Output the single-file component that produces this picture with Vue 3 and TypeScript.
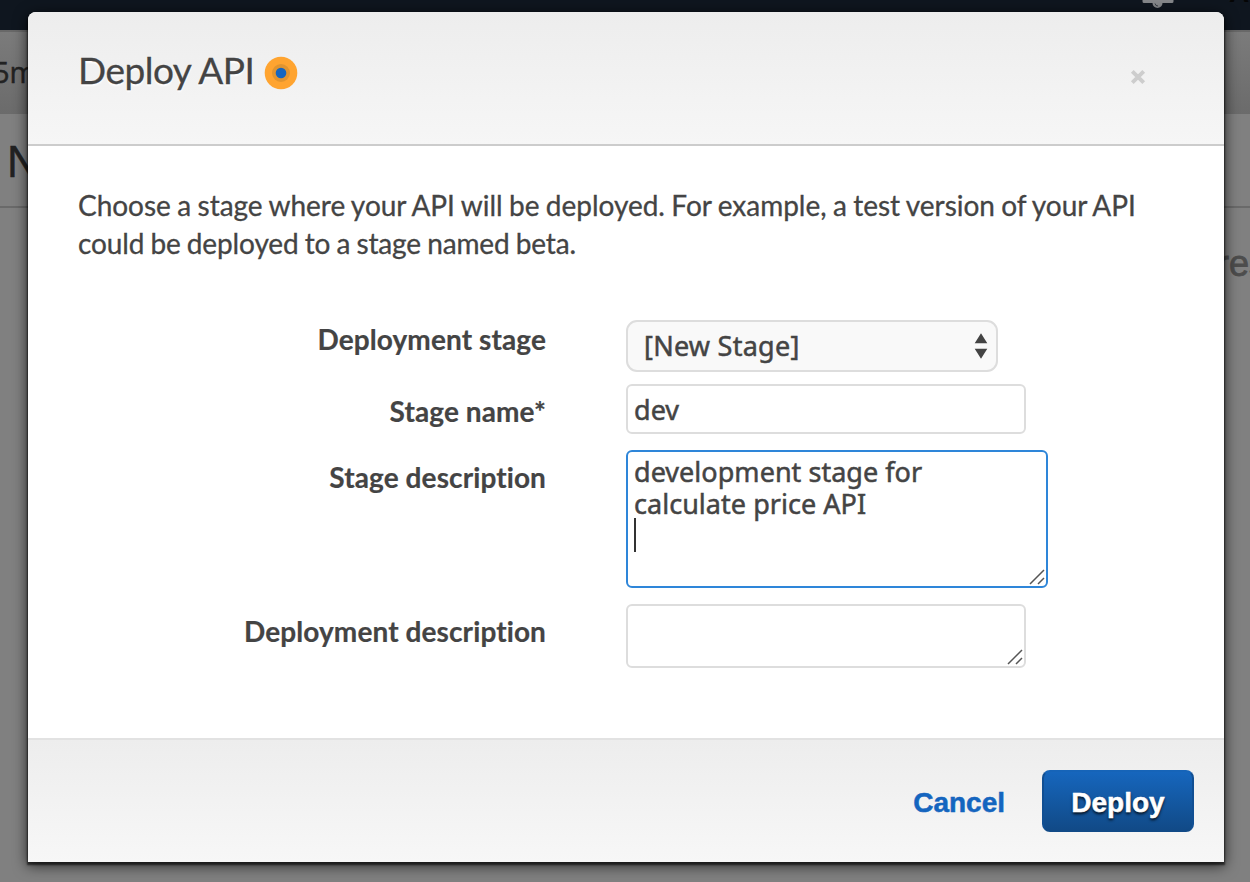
<script setup lang="ts">
import { ref } from 'vue'

const stages = ['[New Stage]']
const stage = ref(stages[0])
const stageName = ref('dev')
const stageDescription = ref('development stage for\ncalculate price API\n')
const deploymentDescription = ref('')
</script>

<template>
  <div class="page">
    <div class="topbar">
      <svg class="bell" width="32" height="9" viewBox="0 0 32 9">
        <path d="M2 -1V1.4H30V-1" fill="none" stroke="#85878a" stroke-width="3" stroke-linejoin="round" />
        <path d="M10.5 3a5 5 0 0 0 10 0z" fill="#85878a" />
        <path d="M13 3.5a3 3 0 0 0 3 2.5" fill="none" stroke="#3a4048" stroke-width="1" />
      </svg>
      <span class="account">Au</span>
    </div>
    <div class="crumbs"><span>5m</span></div>
    <div class="titlebar"><span>N</span></div>
    <div class="content"><span>res</span></div>

    <section class="modal" role="dialog">
      <header class="head">
        <h1>Deploy API</h1>
        <svg class="hint" width="34" height="34" viewBox="0 0 34 34">
          <circle cx="17" cy="17" r="16.3" fill="#ffa430" />
          <circle cx="17" cy="17" r="9" fill="#e1942f" />
          <circle cx="17" cy="17" r="5.3" fill="#1465bf" />
        </svg>
        <button class="close" aria-label="Close">
          <svg width="16" height="16" viewBox="0 0 16 16">
            <path d="M2.3 2.3L13.7 13.7M13.7 2.3L2.3 13.7" stroke="#cdcdcd" stroke-width="3.9" />
          </svg>
        </button>
      </header>

      <div class="body">
        <p class="intro">
          <span class="line one">Choose a stage where your API will be deployed. For example, a test version of your API</span>
          <span class="line two">could be deployed to a stage named beta.</span>
        </p>
        <div class="row r1">
          <label>Deployment stage</label>
          <div class="pick">
            <select v-model="stage" class="field select">
              <option v-for="s in stages" :key="s">{{ s }}</option>
            </select>
            <svg class="arrows" width="14" height="26" viewBox="0 0 14 26">
              <path d="M0.7 10.3L7 0.3L13.3 10.3zM0.7 15.8L7 25.8L13.3 15.8z" fill="#444" />
            </svg>
          </div>
        </div>
        <div class="row r2">
          <label>Stage name*</label>
          <input v-model="stageName" class="field name" />
        </div>
        <div class="row r3">
          <label>Stage description</label>
          <div class="area">
            <textarea v-model="stageDescription" class="field active"></textarea>
            <i class="caret"></i>
            <svg class="grip" width="16" height="16" viewBox="0 0 16 16">
              <path d="M1 15L15 1M9 15L15 9" stroke="#555" stroke-width="1.5" />
            </svg>
          </div>
        </div>
        <div class="row r4">
          <label>Deployment description</label>
          <div class="area">
            <textarea v-model="deploymentDescription" class="field small"></textarea>
            <svg class="grip" width="16" height="16" viewBox="0 0 16 16">
              <path d="M1 15L15 1M9 15L15 9" stroke="#555" stroke-width="1.5" />
            </svg>
          </div>
        </div>
      </div>

      <footer class="foot">
        <button class="cancel">Cancel</button>
        <button class="deploy">Deploy</button>
      </footer>
    </section>
  </div>
</template>

<style>
body { margin: 0; }
</style>

<style scoped>
* { box-sizing: border-box; }
.page {
  position: relative;
  width: 1250px;
  height: 882px;
  overflow: hidden;
  background: #808080;
  font-family: Lato, sans-serif;
  font-variant-ligatures: none;
  color: #444;
}
.topbar { height: 30px; background: #0f161f; display: flex; justify-content: flex-end; }
.bell { margin-right: 55px; }
.account {
  width: 21px; height: 30px; margin-top: -22px; overflow: hidden; white-space: nowrap;
  font: bold 28px/30px "Liberation Sans", sans-serif; color: #050505;
}
.crumbs {
  height: 84px; border-top: 2px solid #686868;
  background: linear-gradient(#7b7b7b, #6b6b6b);
  font: 29px/80px "Open Sans", sans-serif; color: #222;
}
.crumbs span { margin-left: -7px; -webkit-text-stroke: .5px #222; }
.titlebar {
  height: 94px; border-bottom: 2px solid #6a6a6a;
  font: 44px/96px "Liberation Sans", sans-serif; color: #222; padding-left: 7px;
}
.titlebar span { -webkit-text-stroke: .5px #222; }
.content {
  height: 120px; text-align: right; white-space: nowrap;
  font: 36px/112px "Liberation Sans", sans-serif; color: #4d4d4d;
}
.content span { margin-right: -17px; -webkit-text-stroke: .8px #4d4d4d; }

.modal {
  position: absolute; left: 28px; top: 12px;
  width: 1196px; height: 850px;
  display: flex; flex-direction: column;
  background: #fff;
  border-radius: 8px 8px 0 0;
  box-shadow: 0 2px 2px 1px rgba(0, 0, 0, .6), 0 3px 14px 1px rgba(0, 0, 0, .65);
}
.head {
  height: 134px; padding: 0 78px 14px 50px;
  display: flex; align-items: center;
  border-bottom: 2px solid #ccc;
  border-radius: 8px 8px 0 0;
  background: linear-gradient(#ededed, #f6f6f6);
}
h1 {
  margin: -2px 0 0; font-size: 37px; font-weight: 400; line-height: 44px; letter-spacing: -.5px;
  -webkit-text-stroke: .3px #444;
  text-shadow: 0 2px 2px #fff;
}
.hint { margin: 3px 0 0 10px; }
.close { margin: 11px 0 0 auto; padding: 0; border: 0; background: none; display: flex; }
.body { flex: 1; padding: 40px 50px 0; }
.intro { margin: 0; height: 76px; font-size: 28px; line-height: 38px; -webkit-text-stroke: .3px #444; }
.line { display: block; white-space: nowrap; letter-spacing: -.03px; word-spacing: -.7px; }
.two { letter-spacing: -.12px; word-spacing: -.9px; }
.row { display: flex; align-items: flex-start; }
.row label {
  width: 468px; margin-right: 80px; text-align: right;
  font-size: 28px; font-weight: 700; line-height: 34px; white-space: nowrap;
  letter-spacing: .1px; -webkit-text-stroke: .2px #444;
}
.r1 { margin-top: 58px; height: 64px; }
.r1 label { padding-top: 2px; }
.r2 { height: 66px; }
.r2 label { padding-top: 10px; }
.r3 { height: 154px; }
.r3 label { padding-top: 10px; }
.r4 label { padding-top: 10px; }
.field {
  display: block; margin: 0; padding: 0 6px;
  appearance: none; outline: none; resize: none; overflow: hidden;
  border: 2px solid #ddd; border-radius: 6px; background: #fff;
  font-family: "Noto Sans", sans-serif; font-size: 27px; line-height: 32px; color: #444;
  -webkit-text-stroke: .5px #444; letter-spacing: .03px;
}
.pick, .area { position: relative; }
.select {
  width: 372px; height: 52px; padding-left: 16px; line-height: 46px; letter-spacing: .25px;
  border-radius: 11px; background: #f9f9f9;
}
.arrows { position: absolute; right: 10px; top: 13px; }
.name { width: 400px; height: 50px; }
.active { width: 422px; height: 138px; padding-top: 4px; border-color: #2e86d9; }
.small { width: 400px; height: 64px; }
.caret { position: absolute; left: 8px; top: 68px; width: 2px; height: 34px; background: #333; }
.grip { position: absolute; right: 3px; bottom: 3px; }
.foot {
  height: 124px; padding: 0 30px;
  display: flex; align-items: center; justify-content: flex-end;
  border-top: 2px solid #e2e2e2;
  background: linear-gradient(#ededed, #f7f7f7);
}
.foot button { border: 0; padding: 0; font: bold 28px/34px "Liberation Sans", sans-serif; -webkit-text-stroke: .5px currentColor; }
.cancel { background: none; color: #1465bf; margin: 3px 37px 0 0; }
.foot .deploy {
  width: 152px; height: 62px; border: 2px solid #114f93; border-top-color: #1664b8; border-bottom-color: #114a87;
  border-radius: 8px; color: #fff; padding-top: 3px;
  background: linear-gradient(#1666bd, #114a87);
  text-shadow: 0 2px 3px rgba(0, 0, 0, .9);
}
</style>
